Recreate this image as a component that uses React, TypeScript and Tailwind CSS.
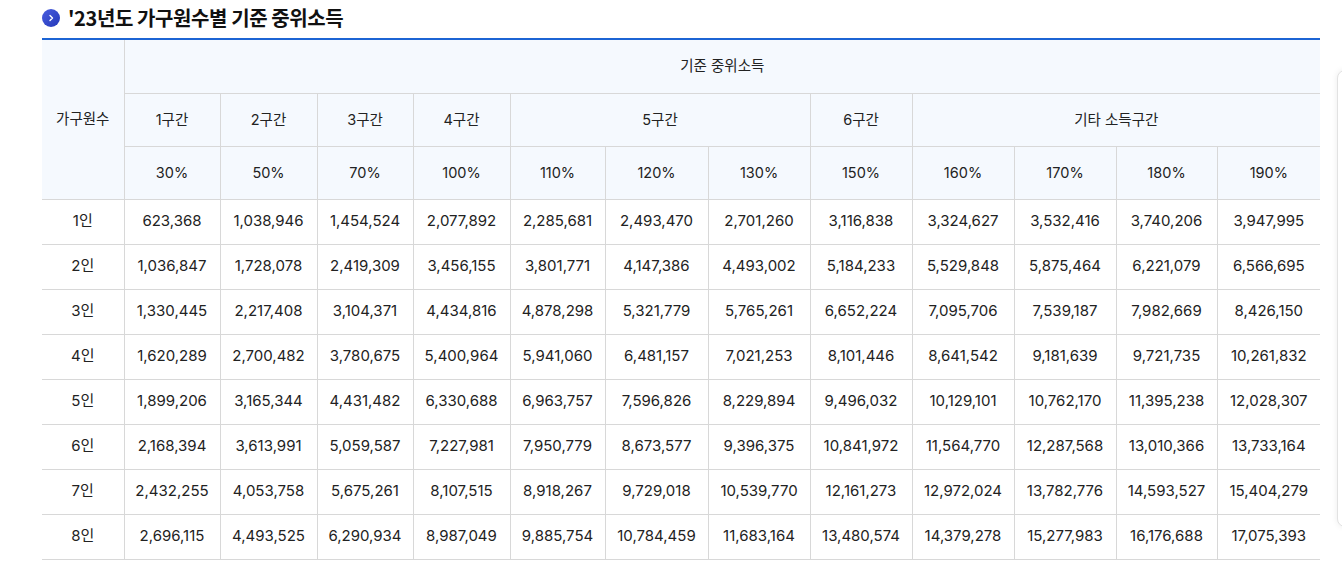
import React from 'react';

const rows: [string, string[]][] = [
  ['1인', ['623,368', '1,038,946', '1,454,524', '2,077,892', '2,285,681', '2,493,470', '2,701,260', '3,116,838', '3,324,627', '3,532,416', '3,740,206', '3,947,995']],
  ['2인', ['1,036,847', '1,728,078', '2,419,309', '3,456,155', '3,801,771', '4,147,386', '4,493,002', '5,184,233', '5,529,848', '5,875,464', '6,221,079', '6,566,695']],
  ['3인', ['1,330,445', '2,217,408', '3,104,371', '4,434,816', '4,878,298', '5,321,779', '5,765,261', '6,652,224', '7,095,706', '7,539,187', '7,982,669', '8,426,150']],
  ['4인', ['1,620,289', '2,700,482', '3,780,675', '5,400,964', '5,941,060', '6,481,157', '7,021,253', '8,101,446', '8,641,542', '9,181,639', '9,721,735', '10,261,832']],
  ['5인', ['1,899,206', '3,165,344', '4,431,482', '6,330,688', '6,963,757', '7,596,826', '8,229,894', '9,496,032', '10,129,101', '10,762,170', '11,395,238', '12,028,307']],
  ['6인', ['2,168,394', '3,613,991', '5,059,587', '7,227,981', '7,950,779', '8,673,577', '9,396,375', '10,841,972', '11,564,770', '12,287,568', '13,010,366', '13,733,164']],
  ['7인', ['2,432,255', '4,053,758', '5,675,261', '8,107,515', '8,918,267', '9,729,018', '10,539,770', '12,161,273', '12,972,024', '13,782,776', '14,593,527', '15,404,279']],
  ['8인', ['2,696,115', '4,493,525', '6,290,934', '8,987,049', '9,885,754', '10,784,459', '11,683,164', '13,480,574', '14,379,278', '15,277,983', '16,176,688', '17,075,393']],
];

const widths = [82, 96, 97, 96, 97, 95, 103, 102, 102, 102, 102, 101, 103];
const percents = ['30%', '50%', '70%', '100%', '110%', '120%', '130%', '150%', '160%', '170%', '180%', '190%'];

const th = 'border border-[#d8d8d8] bg-[#f5f9fe] font-normal text-center';

export default function App() {
  return (
    <div
      className="relative min-h-[574px] w-[1342px] overflow-hidden bg-white text-[#222]"
      style={{ fontFamily: 'Inter, "Noto Sans CJK KR", sans-serif' }}
    >
      <div className="pl-[42px] pr-[22px]">
        {/* Title */}
        <div className="flex h-[38px] items-center gap-[8px] pb-[2px]">
          <span className="flex h-[18px] w-[18px] items-center justify-center rounded-full bg-gradient-to-br from-[#4a5ee0] to-[#2437b8]">
            <svg width="8" height="8" viewBox="0 0 8 8" fill="none">
              <path d="M3 1.5 5.5 4 3 6.5" stroke="white" strokeWidth="1.4" strokeLinecap="round" strokeLinejoin="round" />
            </svg>
          </span>
          <h2 className="text-[20px] font-bold tracking-[-0.4px] text-[#111]" style={{ fontFamily: '"Noto Sans CJK KR", Inter, sans-serif' }}>
            '23년도 가구원수별 기준 중위소득
          </h2>
        </div>

        {/* Table */}
        <table className="w-[1278px] table-fixed border-collapse border-t-2 border-t-[#1c64d4] text-[14.5px]">
          <colgroup>
            {widths.map((w, i) => (
              <col key={i} style={{ width: w }} />
            ))}
          </colgroup>
          <thead>
            <tr className="h-[54px]">
              <th rowSpan={3} className={`${th} border-l-0 border-t-0`}>가구원수</th>
              <th colSpan={12} className={`${th} border-r-0 border-t-0`}>기준 중위소득</th>
            </tr>
            <tr className="h-[53px]">
              <th className={th}>1구간</th>
              <th className={th}>2구간</th>
              <th className={th}>3구간</th>
              <th className={th}>4구간</th>
              <th colSpan={3} className={th}>5구간</th>
              <th className={th}>6구간</th>
              <th colSpan={4} className={`${th} border-r-0`}>기타 소득구간</th>
            </tr>
            <tr className="h-[53px]">
              {percents.map((p, i) => (
                <th key={p} className={`${th} ${i === 11 ? 'border-r-0' : ''}`}>{p}</th>
              ))}
            </tr>
          </thead>
          <tbody className="text-[15px]">
            {rows.map(([label, vals]) => (
              <tr key={label} className="h-[45px]">
                <td className="border border-l-0 border-[#d8d8d8] text-center">{label}</td>
                {vals.map((v, i) => (
                  <td key={i} className={`border border-[#d8d8d8] text-center ${i === 11 ? 'border-r-0' : ''}`}>
                    {v}
                  </td>
                ))}
              </tr>
            ))}
          </tbody>
        </table>
      </div>

      {/* side panel peeking in from the right */}
      <div className="absolute left-[1337px] top-[70px] h-[457px] w-[240px] rounded-[8px] border border-[#e2e2e2] bg-white shadow-[0_0_6px_rgba(0,0,0,0.08)]" />
    </div>
  );
}
